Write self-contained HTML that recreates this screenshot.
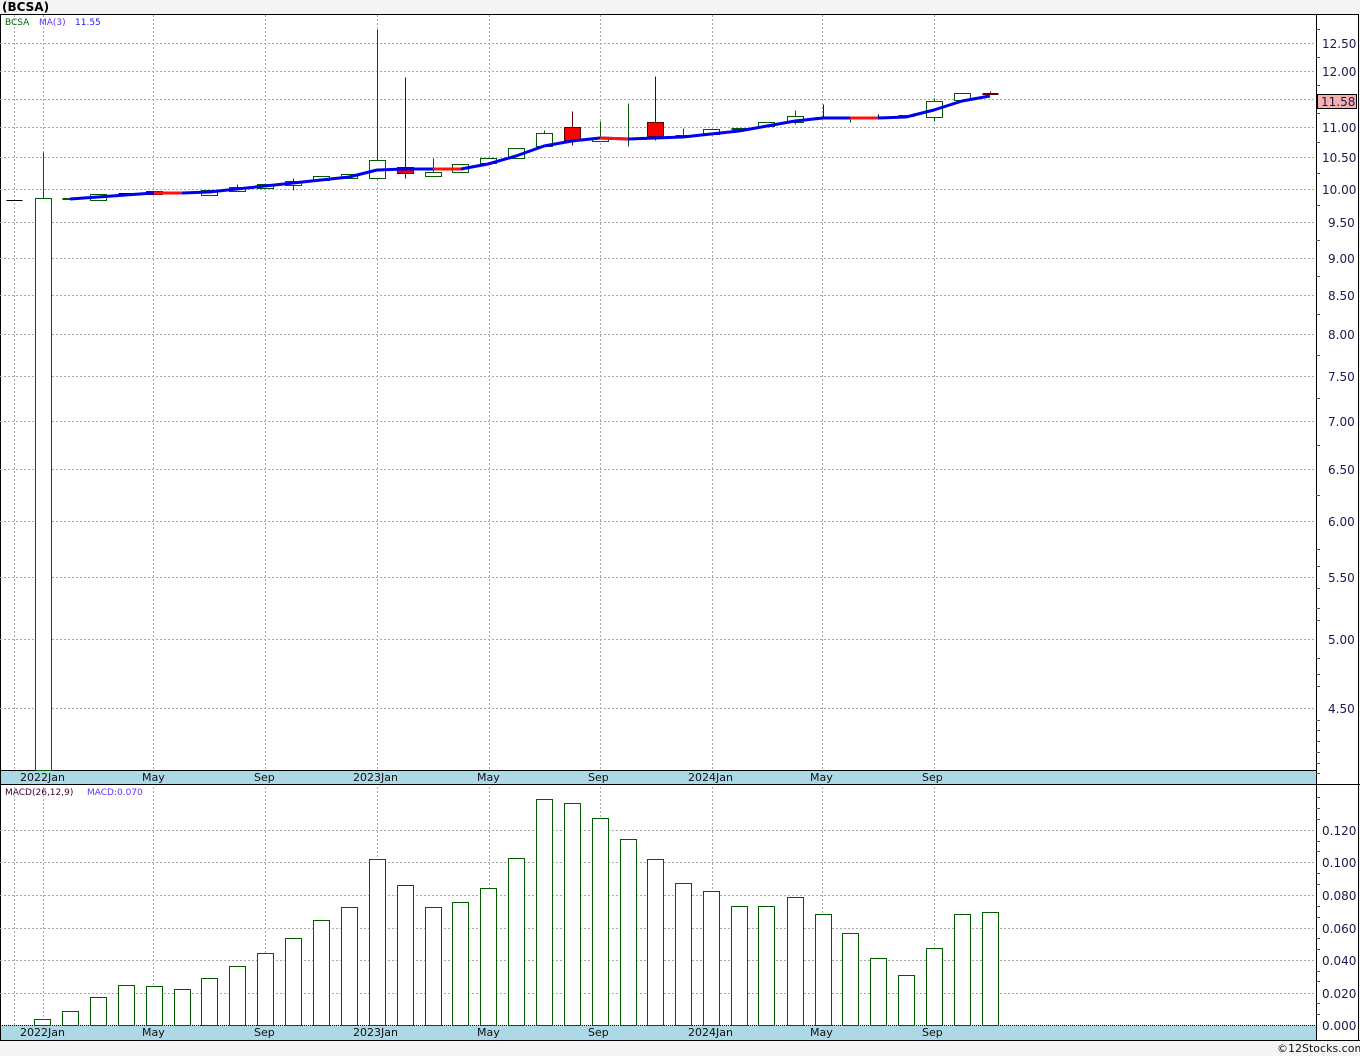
<!DOCTYPE html>
<html><head><meta charset="utf-8"><style>
html,body{margin:0;padding:0;background:#f4f4f4;width:1360px;height:1056px;overflow:hidden}
svg{display:block}
text{font-family:"DejaVu Sans","Liberation Sans",sans-serif}
</style></head><body>
<svg width="1360" height="1056" viewBox="0 0 1360 1056" xmlns="http://www.w3.org/2000/svg">
<rect x="0" y="0" width="1360" height="1056" fill="#f4f4f4"/>
<text x="2" y="11" font-size="12" font-weight="bold" fill="#000" font-family="Liberation Sans,sans-serif">(BCSA)</text>
<rect x="0.5" y="14.5" width="1358" height="1026" fill="#fff" stroke="#000"/>
<g stroke="#aaa" stroke-dasharray="2,2" stroke-width="1">
<line x1="14.5" y1="15" x2="14.5" y2="1025"/>
<line x1="43.5" y1="15" x2="43.5" y2="1025"/>
<line x1="153.5" y1="15" x2="153.5" y2="1025"/>
<line x1="265.5" y1="15" x2="265.5" y2="1025"/>
<line x1="377.5" y1="15" x2="377.5" y2="1025"/>
<line x1="489.5" y1="15" x2="489.5" y2="1025"/>
<line x1="600.5" y1="15" x2="600.5" y2="1025"/>
<line x1="712.5" y1="15" x2="712.5" y2="1025"/>
<line x1="822.5" y1="15" x2="822.5" y2="1025"/>
<line x1="934.5" y1="15" x2="934.5" y2="1025"/>
<line x1="0" y1="43.5" x2="1316" y2="43.5"/>
<line x1="0" y1="71.5" x2="1316" y2="71.5"/>
<line x1="0" y1="99.5" x2="1316" y2="99.5"/>
<line x1="0" y1="127.5" x2="1316" y2="127.5"/>
<line x1="0" y1="157.5" x2="1316" y2="157.5"/>
<line x1="0" y1="189.5" x2="1316" y2="189.5"/>
<line x1="0" y1="222.5" x2="1316" y2="222.5"/>
<line x1="0" y1="258.5" x2="1316" y2="258.5"/>
<line x1="0" y1="295.5" x2="1316" y2="295.5"/>
<line x1="0" y1="334.5" x2="1316" y2="334.5"/>
<line x1="0" y1="376.5" x2="1316" y2="376.5"/>
<line x1="0" y1="421.5" x2="1316" y2="421.5"/>
<line x1="0" y1="469.5" x2="1316" y2="469.5"/>
<line x1="0" y1="521.5" x2="1316" y2="521.5"/>
<line x1="0" y1="577.5" x2="1316" y2="577.5"/>
<line x1="0" y1="639.5" x2="1316" y2="639.5"/>
<line x1="0" y1="708.5" x2="1316" y2="708.5"/>
<line x1="0" y1="830.5" x2="1316" y2="830.5"/>
<line x1="0" y1="862.5" x2="1316" y2="862.5"/>
<line x1="0" y1="895.5" x2="1316" y2="895.5"/>
<line x1="0" y1="928.5" x2="1316" y2="928.5"/>
<line x1="0" y1="960.5" x2="1316" y2="960.5"/>
<line x1="0" y1="993.5" x2="1316" y2="993.5"/>
</g>
<rect x="1" y="770" width="1315" height="14" fill="#add8e6"/>
<line x1="0" y1="770.5" x2="1316" y2="770.5" stroke="#000"/>
<line x1="0" y1="784.5" x2="1360" y2="784.5" stroke="#000"/>
<rect x="1" y="1025" width="1315" height="15" fill="#add8e6"/>
<line x1="0" y1="1025.5" x2="1316" y2="1025.5" stroke="#000" stroke-dasharray="1,1"/>
<line x1="1316.5" y1="14" x2="1316.5" y2="1040" stroke="#000"/>
<g font-size="11" fill="#111">
<text x="20" y="781">2022Jan</text><text x="142" y="781">May</text><text x="254" y="781">Sep</text><text x="353" y="781">2023Jan</text><text x="477" y="781">May</text><text x="588" y="781">Sep</text><text x="688" y="781">2024Jan</text><text x="810" y="781">May</text><text x="922" y="781">Sep</text>
<text x="20" y="1036">2022Jan</text><text x="142" y="1036">May</text><text x="254" y="1036">Sep</text><text x="353" y="1036">2023Jan</text><text x="477" y="1036">May</text><text x="588" y="1036">Sep</text><text x="688" y="1036">2024Jan</text><text x="810" y="1036">May</text><text x="922" y="1036">Sep</text>
</g>
<g stroke="#555">
<line x1="1316" y1="29.5" x2="1320" y2="29.5"/><line x1="1316" y1="57.5" x2="1320" y2="57.5"/><line x1="1316" y1="85.5" x2="1320" y2="85.5"/><line x1="1316" y1="113.5" x2="1320" y2="113.5"/><line x1="1316" y1="142.5" x2="1320" y2="142.5"/><line x1="1316" y1="173.5" x2="1320" y2="173.5"/><line x1="1316" y1="205.5" x2="1320" y2="205.5"/><line x1="1316" y1="240.5" x2="1320" y2="240.5"/><line x1="1316" y1="276.5" x2="1320" y2="276.5"/><line x1="1316" y1="314.5" x2="1320" y2="314.5"/><line x1="1316" y1="355.5" x2="1320" y2="355.5"/><line x1="1316" y1="398.5" x2="1320" y2="398.5"/><line x1="1316" y1="445.5" x2="1320" y2="445.5"/><line x1="1316" y1="495.5" x2="1320" y2="495.5"/><line x1="1316" y1="549.5" x2="1320" y2="549.5"/><line x1="1316" y1="566.5" x2="1320" y2="566.5"/><line x1="1316" y1="588.5" x2="1320" y2="588.5"/><line x1="1316" y1="608.5" x2="1320" y2="608.5"/><line x1="1316" y1="620.5" x2="1320" y2="620.5"/><line x1="1316" y1="658.5" x2="1320" y2="658.5"/><line x1="1316" y1="674.5" x2="1320" y2="674.5"/><line x1="1316" y1="686.5" x2="1320" y2="686.5"/><line x1="1316" y1="720.5" x2="1320" y2="720.5"/><line x1="1316" y1="730.5" x2="1320" y2="730.5"/><line x1="1316" y1="741.5" x2="1320" y2="741.5"/><line x1="1316" y1="752.5" x2="1320" y2="752.5"/><line x1="1316" y1="763.5" x2="1320" y2="763.5"/><line x1="1316" y1="773.5" x2="1320" y2="773.5"/>
<line x1="1316" y1="1014.5" x2="1320" y2="1014.5"/><line x1="1316" y1="1003.5" x2="1320" y2="1003.5"/><line x1="1316" y1="981.5" x2="1320" y2="981.5"/><line x1="1316" y1="971.5" x2="1320" y2="971.5"/><line x1="1316" y1="949.5" x2="1320" y2="949.5"/><line x1="1316" y1="938.5" x2="1320" y2="938.5"/><line x1="1316" y1="917.5" x2="1320" y2="917.5"/><line x1="1316" y1="906.5" x2="1320" y2="906.5"/><line x1="1316" y1="884.5" x2="1320" y2="884.5"/><line x1="1316" y1="873.5" x2="1320" y2="873.5"/><line x1="1316" y1="851.5" x2="1320" y2="851.5"/><line x1="1316" y1="841.5" x2="1320" y2="841.5"/><line x1="1316" y1="819.5" x2="1320" y2="819.5"/><line x1="1316" y1="808.5" x2="1320" y2="808.5"/><line x1="1316" y1="797.5" x2="1320" y2="797.5"/>
</g>
<g font-size="12" fill="#1a1a50">
<text x="1322" y="48">12.50</text><text x="1322" y="76">12.00</text><text x="1322" y="132">11.00</text><text x="1322" y="162">10.50</text><text x="1322" y="194">10.00</text><text x="1328" y="227">9.50</text><text x="1328" y="263">9.00</text><text x="1328" y="300">8.50</text><text x="1328" y="339">8.00</text><text x="1328" y="381">7.50</text><text x="1328" y="426">7.00</text><text x="1328" y="474">6.50</text><text x="1328" y="526">6.00</text><text x="1328" y="582">5.50</text><text x="1328" y="644">5.00</text><text x="1328" y="713">4.50</text>
<text x="1322" y="835">0.120</text><text x="1322" y="867">0.100</text><text x="1322" y="900">0.080</text><text x="1322" y="933">0.060</text><text x="1322" y="965">0.040</text><text x="1322" y="998">0.020</text><text x="1322" y="1030">0.000</text>
</g>
<rect x="1317.5" y="94.5" width="39" height="14" fill="#f6b0b0" stroke="#000"/>
<text x="1321" y="106" font-size="12" fill="#1a1a50">11.58</text>
<text x="5" y="25" font-size="9" fill="#060">BCSA</text>
<text x="39" y="25" font-size="9" fill="#6633ff">MA(3)</text>
<text x="75" y="25" font-size="9" fill="#2222ee">11.55</text>
<text x="5" y="795" font-size="9" fill="#400030">MACD(26,12,9)</text>
<text x="87" y="795" font-size="9" fill="#6633ff">MACD:0.070</text>
<g stroke="#005a00" stroke-width="1" fill="#fff" transform="translate(0.5,0.5)">
<line x1="6" y1="200" x2="22" y2="200" stroke="#000"/>
<line x1="43" y1="152" x2="43" y2="198"/><rect x="35" y="198" width="16" height="572"/>
<line x1="62" y1="198" x2="78" y2="198"/><line x1="62" y1="199" x2="78" y2="199"/>
<rect x="90" y="194" width="16" height="6"/>
<line x1="118" y1="193" x2="134" y2="193" stroke="#000"/>
<line x1="201" y1="194" x2="217" y2="194"/><rect x="201" y="190" width="16" height="5"/>
<line x1="237" y1="184" x2="237" y2="187"/><rect x="229" y="187" width="16" height="4"/>
<rect x="257" y="184" width="16" height="4"/>
<line x1="293" y1="178" x2="293" y2="190"/><rect x="285" y="181" width="16" height="4"/>
<rect x="313" y="176" width="16" height="4"/>
<rect x="341" y="174" width="16" height="4"/>
<line x1="377" y1="29" x2="377" y2="179"/><rect x="369" y="160" width="16" height="18"/>
<line x1="433" y1="158" x2="433" y2="172"/><rect x="425" y="172" width="16" height="4"/>
<rect x="452" y="164" width="16" height="8"/>
<rect x="480" y="158" width="16" height="5"/>
<rect x="508" y="148" width="16" height="10"/>
<line x1="544" y1="130" x2="544" y2="133"/><rect x="536" y="133" width="16" height="13"/>
<line x1="600" y1="121" x2="600" y2="138"/><rect x="592" y="138" width="16" height="3"/>
<line x1="628" y1="103" x2="628" y2="146"/><line x1="620" y1="139" x2="636" y2="139"/>
<line x1="683" y1="128" x2="683" y2="136"/><line x1="675" y1="135" x2="691" y2="135"/>
<rect x="703" y="129" width="16" height="5"/>
<line x1="731" y1="128" x2="747" y2="128"/><line x1="731" y1="129" x2="747" y2="129"/>
<rect x="758" y="122" width="16" height="4"/>
<line x1="795" y1="110" x2="795" y2="124"/><rect x="787" y="116" width="16" height="6"/>
<line x1="850" y1="117" x2="850" y2="122"/>
<line x1="898" y1="115" x2="914" y2="115"/><line x1="898" y1="116" x2="914" y2="116"/>
<line x1="934" y1="98" x2="934" y2="121"/><rect x="926" y="101" width="16" height="16"/>
<rect x="954" y="93" width="16" height="7"/>
</g>
<g stroke="#600000" stroke-width="1" fill="#f00" transform="translate(0.5,0.5)">
<rect x="146" y="191" width="16" height="3"/>
<line x1="405" y1="77" x2="405" y2="178"/><rect x="397" y="167" width="16" height="6"/>
<line x1="572" y1="111" x2="572" y2="145"/><rect x="564" y="127" width="16" height="13"/>
<line x1="655" y1="76" x2="655" y2="140"/><rect x="647" y="122" width="16" height="14"/>
<line x1="823" y1="104" x2="823" y2="118"/><line x1="815" y1="117" x2="831" y2="117"/><line x1="815" y1="118" x2="831" y2="118"/>
<line x1="878" y1="114" x2="878" y2="119" stroke="#000"/>
<line x1="990" y1="91" x2="990" y2="94"/><line x1="982" y1="93" x2="998" y2="93"/><line x1="982" y1="94" x2="998" y2="94"/>
</g>
<polyline fill="none" stroke="#0000ee" stroke-width="3" stroke-linejoin="round" points="70,199 98,197 126,195 154,193 182,193 209,192 237,189 265,186 293,183 321,180 349,177 377,170 405,169 433,169 461,169 488,164 516,156 544,146 572,141 600,138 628,139 655,138 683,137 711,134 739,131 767,126 795,121 823,118 850,118 878,118 906,117 934,110 962,101 990,96"/>
<g fill="none" stroke="#ff1010" stroke-width="3">
<polyline points="154,193 182,193"/>
<polyline points="433,169 461,169"/>
<polyline points="600,138 628,139"/>
<polyline points="850,118 878,118"/>
</g>
<g stroke="#005a00" stroke-width="1" fill="#fff" transform="translate(0.5,0.5)">
<rect x="34" y="1019" width="16" height="6"/>
<rect x="62" y="1011" width="16" height="14"/>
<rect x="90" y="997" width="16" height="28"/>
<rect x="118" y="985" width="16" height="40"/>
<rect x="146" y="986" width="16" height="39"/>
<rect x="174" y="989" width="16" height="36"/>
<rect x="201" y="978" width="16" height="47"/>
<rect x="229" y="966" width="16" height="59"/>
<rect x="257" y="953" width="16" height="72"/>
<rect x="285" y="938" width="16" height="87"/>
<rect x="313" y="920" width="16" height="105"/>
<rect x="341" y="907" width="16" height="118"/>
<rect x="369" y="859" width="16" height="166"/>
<rect x="397" y="885" width="16" height="140"/>
<rect x="425" y="907" width="16" height="118"/>
<rect x="452" y="902" width="16" height="123"/>
<rect x="480" y="888" width="16" height="137"/>
<rect x="508" y="858" width="16" height="167"/>
<rect x="536" y="799" width="16" height="226"/>
<rect x="564" y="803" width="16" height="222"/>
<rect x="592" y="818" width="16" height="207"/>
<rect x="620" y="839" width="16" height="186"/>
<rect x="647" y="859" width="16" height="166"/>
<rect x="675" y="883" width="16" height="142"/>
<rect x="703" y="891" width="16" height="134"/>
<rect x="731" y="906" width="16" height="119"/>
<rect x="758" y="906" width="16" height="119"/>
<rect x="787" y="897" width="16" height="128"/>
<rect x="815" y="914" width="16" height="111"/>
<rect x="842" y="933" width="16" height="92"/>
<rect x="870" y="958" width="16" height="67"/>
<rect x="898" y="975" width="16" height="50"/>
<rect x="926" y="948" width="16" height="77"/>
<rect x="954" y="914" width="16" height="111"/>
<rect x="982" y="912" width="16" height="113"/>
</g>
<rect x="0" y="1041" width="1360" height="15" fill="#f4f4f4"/>
<line x1="0" y1="1040.5" x2="1360" y2="1040.5" stroke="#000"/>
<text x="1277" y="1052" font-size="11" fill="#111">©12Stocks.com</text>
</svg>
</body></html>
